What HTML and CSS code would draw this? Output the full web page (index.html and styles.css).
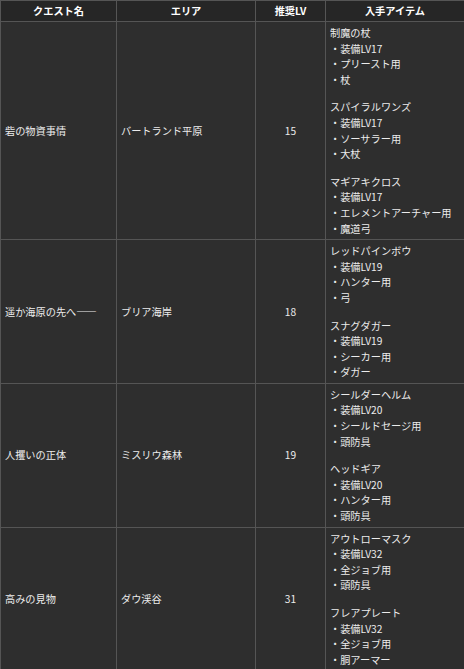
FILE: index.html
```html
<!DOCTYPE html>
<html lang="ja">
<head>
<meta charset="utf-8">
<link rel="stylesheet" href="styles.css">
</head>
<body>
<table class="quest">
  <colgroup>
    <col class="c-name"><col class="c-area"><col class="c-lv"><col class="c-item">
  </colgroup>
  <thead>
    <tr><th>クエスト名</th><th>エリア</th><th>推奨LV</th><th>入手アイテム</th></tr>
  </thead>
  <tbody>
    <tr class="r3">
      <td>砦の物資事情</td>
      <td>バートランド平原</td>
      <td class="lv">15</td>
      <td class="items">
        <div class="item"><div>制魔の杖</div><div>・装備LV17</div><div>・プリースト用</div><div>・杖</div></div>
        <div class="item"><div>スパイラルワンズ</div><div>・装備LV17</div><div>・ソーサラー用</div><div>・大杖</div></div>
        <div class="item"><div>マギアキクロス</div><div>・装備LV17</div><div>・エレメントアーチャー用</div><div>・魔道弓</div></div>
      </td>
    </tr>
    <tr>
      <td>遥か海原の先へ――</td>
      <td>ブリア海岸</td>
      <td class="lv">18</td>
      <td class="items">
        <div class="item"><div>レッドパインボウ</div><div>・装備LV19</div><div>・ハンター用</div><div>・弓</div></div>
        <div class="item"><div>スナグダガー</div><div>・装備LV19</div><div>・シーカー用</div><div>・ダガー</div></div>
      </td>
    </tr>
    <tr>
      <td>人攫いの正体</td>
      <td>ミスリウ森林</td>
      <td class="lv">19</td>
      <td class="items">
        <div class="item"><div>シールダーヘルム</div><div>・装備LV20</div><div>・シールドセージ用</div><div>・頭防具</div></div>
        <div class="item"><div>ヘッドギア</div><div>・装備LV20</div><div>・ハンター用</div><div>・頭防具</div></div>
      </td>
    </tr>
    <tr>
      <td>高みの見物</td>
      <td>ダウ渓谷</td>
      <td class="lv">31</td>
      <td class="items">
        <div class="item"><div>アウトローマスク</div><div>・装備LV32</div><div>・全ジョブ用</div><div>・頭防具</div></div>
        <div class="item"><div>フレアプレート</div><div>・装備LV32</div><div>・全ジョブ用</div><div>・胴アーマー</div></div>
      </td>
    </tr>
  </tbody>
</table>
</body>
</html>
```

FILE: styles.css
```css
html, body {
  margin: 0;
  padding: 0;
  background: #2e2e2e;
}
body {
  font-family: "Noto Sans CJK JP", "Noto Sans", sans-serif;
  font-size: 10.2px;
  color: #ececec;
}
.quest {
  width: 464px;
  border-collapse: collapse;
  table-layout: fixed;
  background: #2e2e2e;
}
.c-name { width: 116px; }
.c-area { width: 139px; }
.c-lv { width: 70px; }
.c-item { width: 139px; }
.quest th, .quest td {
  border: 1px solid #555555;
  vertical-align: middle;
  line-height: 15.6px;
}
.quest th {
  background: #262626;
  color: #ffffff;
  font-weight: bold;
  text-align: center;
  height: 20px;
  padding: 0 4px;
}
.quest td {
  padding: 3px 4px;
  text-align: left;
  white-space: nowrap;
}
.quest td.lv {
  text-align: center;
}
.item + .item {
  margin-top: 12px;
}
```
